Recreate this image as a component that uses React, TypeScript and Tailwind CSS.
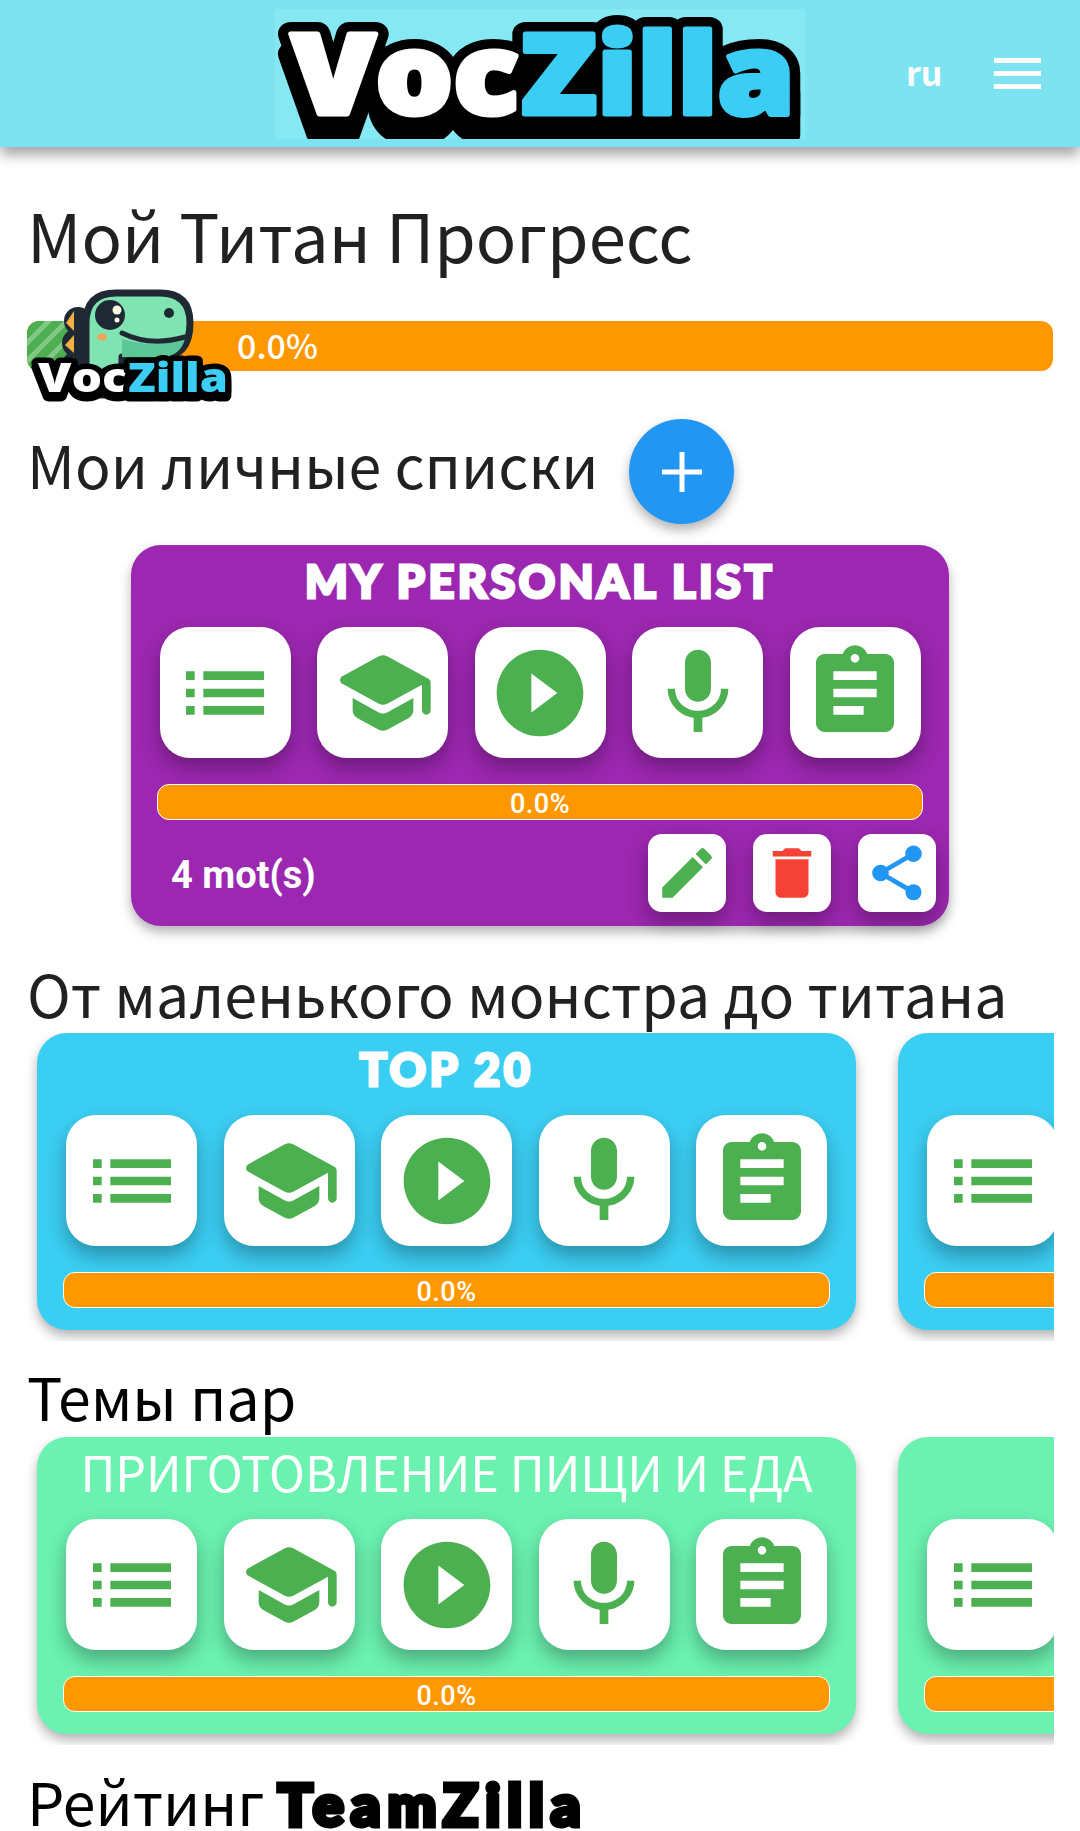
import { MdAssignment, MdDelete, MdEdit, MdList, MdMic, MdPlayCircleFilled, MdShare } from 'react-icons/md';

function SchoolIcon() {
  return (
    <svg viewBox="0 0 24 24" className="w-[104px] h-[104px] fill-[#4caf50]">
      <path d="M5 13.18v2.81c0 .73.4 1.41 1.04 1.76l5 2.73c.6.33 1.32.33 1.92 0l5-2.73c.64-.35 1.04-1.03 1.04-1.76v-2.81l-6.04 3.3c-.6.33-1.32.33-1.92 0L5 13.18zm6.04-9.66l-8.43 4.6c-.69.38-.69 1.38 0 1.76l8.43 4.6c.6.33 1.32.33 1.92 0L21 10.09V16c0 .55.45 1 1 1s1-.45 1-1V9.59c0-.37-.2-.7-.52-.88l-9.52-5.19c-.6-.32-1.32-.32-1.92 0z" />
    </svg>
  );
}

function IconButton({ children }: { children: React.ReactNode }) {
  return (
    <div className="w-[131px] h-[131px] shrink-0 rounded-[30px] bg-white flex items-center justify-center shadow-[0_10px_20px_rgba(0,0,0,0.3)]">
      {children}
    </div>
  );
}

function SmallButton({ children }: { children: React.ReactNode }) {
  return (
    <div className="w-[78px] h-[78px] rounded-[14px] bg-white flex items-center justify-center shadow-[0_10px_20px_rgba(0,0,0,0.3)]">
      {children}
    </div>
  );
}

function Progress() {
  return (
    <div className="mx-[26px] mt-[26px] h-[36px] rounded-[12px] border border-white bg-[#ff9800] flex items-center justify-center pt-[4px] font-['Roboto',sans-serif] font-medium tracking-[0.5px] text-[27px] text-white">
      0.0%
    </div>
  );
}

function ListCard({ title, color, titleClass, children, className }: { title?: string; color: string; titleClass?: string; children?: React.ReactNode; className?: string }) {
  return (
    <div className={`${color} ${className} rounded-[30px] shadow-[0_6px_12px_rgba(0,0,0,0.3)]`}>
      <div className={`h-[82px] pb-[9px] flex items-center justify-center text-white whitespace-nowrap ${titleClass}`}>{title}</div>
      <div className="flex justify-center gap-[26.5px]">
        <IconButton><MdList size={104} color="#4caf50" /></IconButton>
        <IconButton><SchoolIcon /></IconButton>
        <IconButton><MdPlayCircleFilled size={104} color="#4caf50" /></IconButton>
        <IconButton><MdMic size={104} color="#4caf50" /></IconButton>
        <IconButton><MdAssignment size={104} color="#4caf50" /></IconButton>
      </div>
      <Progress />
      {children}
    </div>
  );
}

const heavyTitle = "font-['Lato',sans-serif] font-black text-[45px] tracking-[3.5px] [-webkit-text-stroke:3px_white]";

function Carousel({ title, color, titleClass }: { title: string; color: string; titleClass: string }) {
  return (
    <div className="w-[1027px] overflow-hidden pl-[10px] pb-[11px] flex gap-[42px]">
      <ListCard title={title} color={color} titleClass={titleClass} className="w-[819px] h-[297px] shrink-0" />
      <ListCard color={color} className="w-[819px] h-[297px] shrink-0" />
    </div>
  );
}

function HeaderLogo() {
  const word = "font-['Open_Sans',sans-serif] font-extrabold text-[112px]";
  return (
    <svg viewBox="0 0 530 130" className="w-[530px] h-[130px] bg-[#86e8f2]">
      <g className="[filter:drop-shadow(0_20px_0_black)]">
        <text x="16" y="105" textLength="228" lengthAdjust="spacingAndGlyphs" fill="white" stroke="black" strokeWidth="24" strokeLinejoin="round" paintOrder="stroke" className={word}>Voc</text>
        <text x="246" y="105" textLength="274" lengthAdjust="spacingAndGlyphs" fill="#3bcdf3" stroke="black" strokeWidth="24" strokeLinejoin="round" paintOrder="stroke" className={word}>Zilla</text>
      </g>
      <text x="16" y="105" textLength="228" lengthAdjust="spacingAndGlyphs" fill="white" stroke="white" strokeWidth="5" strokeLinejoin="round" className={word} aria-hidden="true">Voc</text>
      <text x="246" y="105" textLength="274" lengthAdjust="spacingAndGlyphs" fill="#3bcdf3" stroke="#3bcdf3" strokeWidth="5" strokeLinejoin="round" className={word} aria-hidden="true">Zilla</text>
    </svg>
  );
}

function DinoLogo() {
  const word = "font-['Open_Sans',sans-serif] font-extrabold text-[40px]";
  return (
    <svg viewBox="0 0 210 125" className="absolute left-[3px] top-[-36px] w-[210px] h-[125px]">
      <g fill="#1f2933">
        <circle cx="48" cy="36" r="14" />
        <circle cx="46" cy="58" r="14" />
        <circle cx="46" cy="80" r="14" />
      </g>
      <g fill="#f5b041">
        <path d="M44 26 L36 38 L44 46 Z" />
        <path d="M44 50 L35 60 L44 68 Z" />
        <path d="M44 72 L36 82 L44 90 Z" />
      </g>
      <path d="M56 110 L56 38 Q56 8 86 8 L130 8 Q160 8 160 38 Q160 72 130 72 L92 72 L92 110 Z" fill="#7fe3b2" stroke="#1f2933" strokeWidth="7" strokeLinejoin="round" />
      <path d="M92 72 L130 72 Q150 72 155 54 Q125 64 92 54 Z" fill="#5cc796" />
      <circle cx="80" cy="30" r="15" fill="#1f2933" />
      <circle cx="87" cy="25" r="4.5" fill="#fdf8e1" />
      <circle cx="87" cy="35" r="2.5" fill="#fdf8e1" />
      <circle cx="139" cy="28" r="5" fill="#1f2933" />
      <ellipse cx="72" cy="52" rx="5" ry="3.5" fill="#f5a55a" />
      <path d="M92 48 Q120 62 155 52" fill="none" stroke="#1f2933" strokeWidth="5" strokeLinecap="round" />
      <g className="[filter:drop-shadow(0_4px_0_black)]">
        <text x="8" y="107" textLength="90" lengthAdjust="spacingAndGlyphs" fill="white" stroke="black" strokeWidth="11" strokeLinejoin="round" paintOrder="stroke" className={word}>Voc</text>
        <text x="98" y="107" textLength="100" lengthAdjust="spacingAndGlyphs" fill="#3bcdf3" stroke="black" strokeWidth="11" strokeLinejoin="round" paintOrder="stroke" className={word}>Zilla</text>
      </g>
    </svg>
  );
}

export default function App() {
  return (
    <div className="h-[1831px] overflow-hidden bg-white font-['Noto_Sans_CJK_SC','Noto_Sans',sans-serif] text-[#212121]">
      <header className="relative h-[147px] bg-[#7de3f0] shadow-[0_8px_12px_rgba(0,0,0,0.35)] flex items-center pl-[275px]">
        <HeaderLogo />
        <span className="ml-[101px] w-[88px] pb-[4px] font-bold text-[34px] text-white">ru</span>
        <div className="flex flex-col gap-[8px]">
          <span className="block w-[47px] h-[5px] bg-white" />
          <span className="block w-[47px] h-[5px] bg-white" />
          <span className="block w-[47px] h-[5px] bg-white" />
        </div>
      </header>

      <main className="px-[27px]">
        <h1 className="mt-[44px] pt-[3px] h-[80px] text-[67px] leading-[80px] whitespace-nowrap">Мой Титан Прогресс</h1>

        <div className="relative mt-[50px] h-[50px] rounded-[12px] bg-[#ff9800] flex items-center">
          <div className="absolute left-0 top-0 h-full w-[70px] rounded-l-[12px] bg-[#4caf50] bg-[repeating-linear-gradient(135deg,rgba(255,255,255,0.3)_0,rgba(255,255,255,0.3)_5px,transparent_5px,transparent_13px)]" />
          <span className="ml-[210px] pb-[4px] text-[34px] font-medium text-white">0.0%</span>
          <DinoLogo />
        </div>

        <div className="mt-[48px] flex items-center gap-[31px] h-[105px]">
          <h2 className="pb-[16px] text-[59px] leading-[72px] whitespace-nowrap">Мои личные списки</h2>
          <div className="w-[105px] h-[105px] rounded-full bg-[#2196f3] flex items-center justify-center shadow-[0_6px_12px_rgba(0,0,0,0.3)]">
            <svg viewBox="0 0 40 40" className="w-[40px] h-[40px] stroke-white" strokeWidth="5"><path d="M20 0V40M0 20H40" /></svg>
          </div>
        </div>

        <ListCard title="MY PERSONAL LIST" color="bg-[#9c27b0]" titleClass={heavyTitle} className="relative mt-[21px] ml-[104px] w-[818px] h-[381px]">
          <div className="mt-[14px] flex items-center pl-[40px] pr-[13px]">
            <span className="pt-[4px] font-['Roboto',sans-serif] font-bold text-[38px] text-white">4 mot(s)</span>
            <div className="ml-auto flex gap-[27px]">
              <SmallButton><MdEdit size={66} color="#4caf50" /></SmallButton>
              <SmallButton><MdDelete size={66} color="#f44336" /></SmallButton>
              <SmallButton><MdShare size={66} color="#2196f3" /></SmallButton>
            </div>
          </div>
        </ListCard>

        <h2 className="mt-[34px] h-[73px] text-[59px] leading-[65px] whitespace-nowrap">От маленького монстра до титана</h2>
        <Carousel title="TOP 20" color="bg-[#3bcef3]" titleClass={heavyTitle} />

        <h2 className="mt-[22px] h-[74px] text-[59px] leading-[65px] text-black">Темы пар</h2>
        <Carousel title="ПРИГОТОВЛЕНИЕ ПИЩИ И ЕДА" color="bg-[#6bf2b0]" titleClass="text-[48.5px] -translate-y-[2px]" />

        <h2 className="mt-[20px] h-[72px] text-[59px] leading-[72px] text-black whitespace-nowrap">
          Рейтинг <span className="font-['Lato',sans-serif] font-black text-[58px] tracking-[7px] [-webkit-text-stroke:5px_black]">TeamZilla</span>
        </h2>
      </main>
    </div>
  );
}
